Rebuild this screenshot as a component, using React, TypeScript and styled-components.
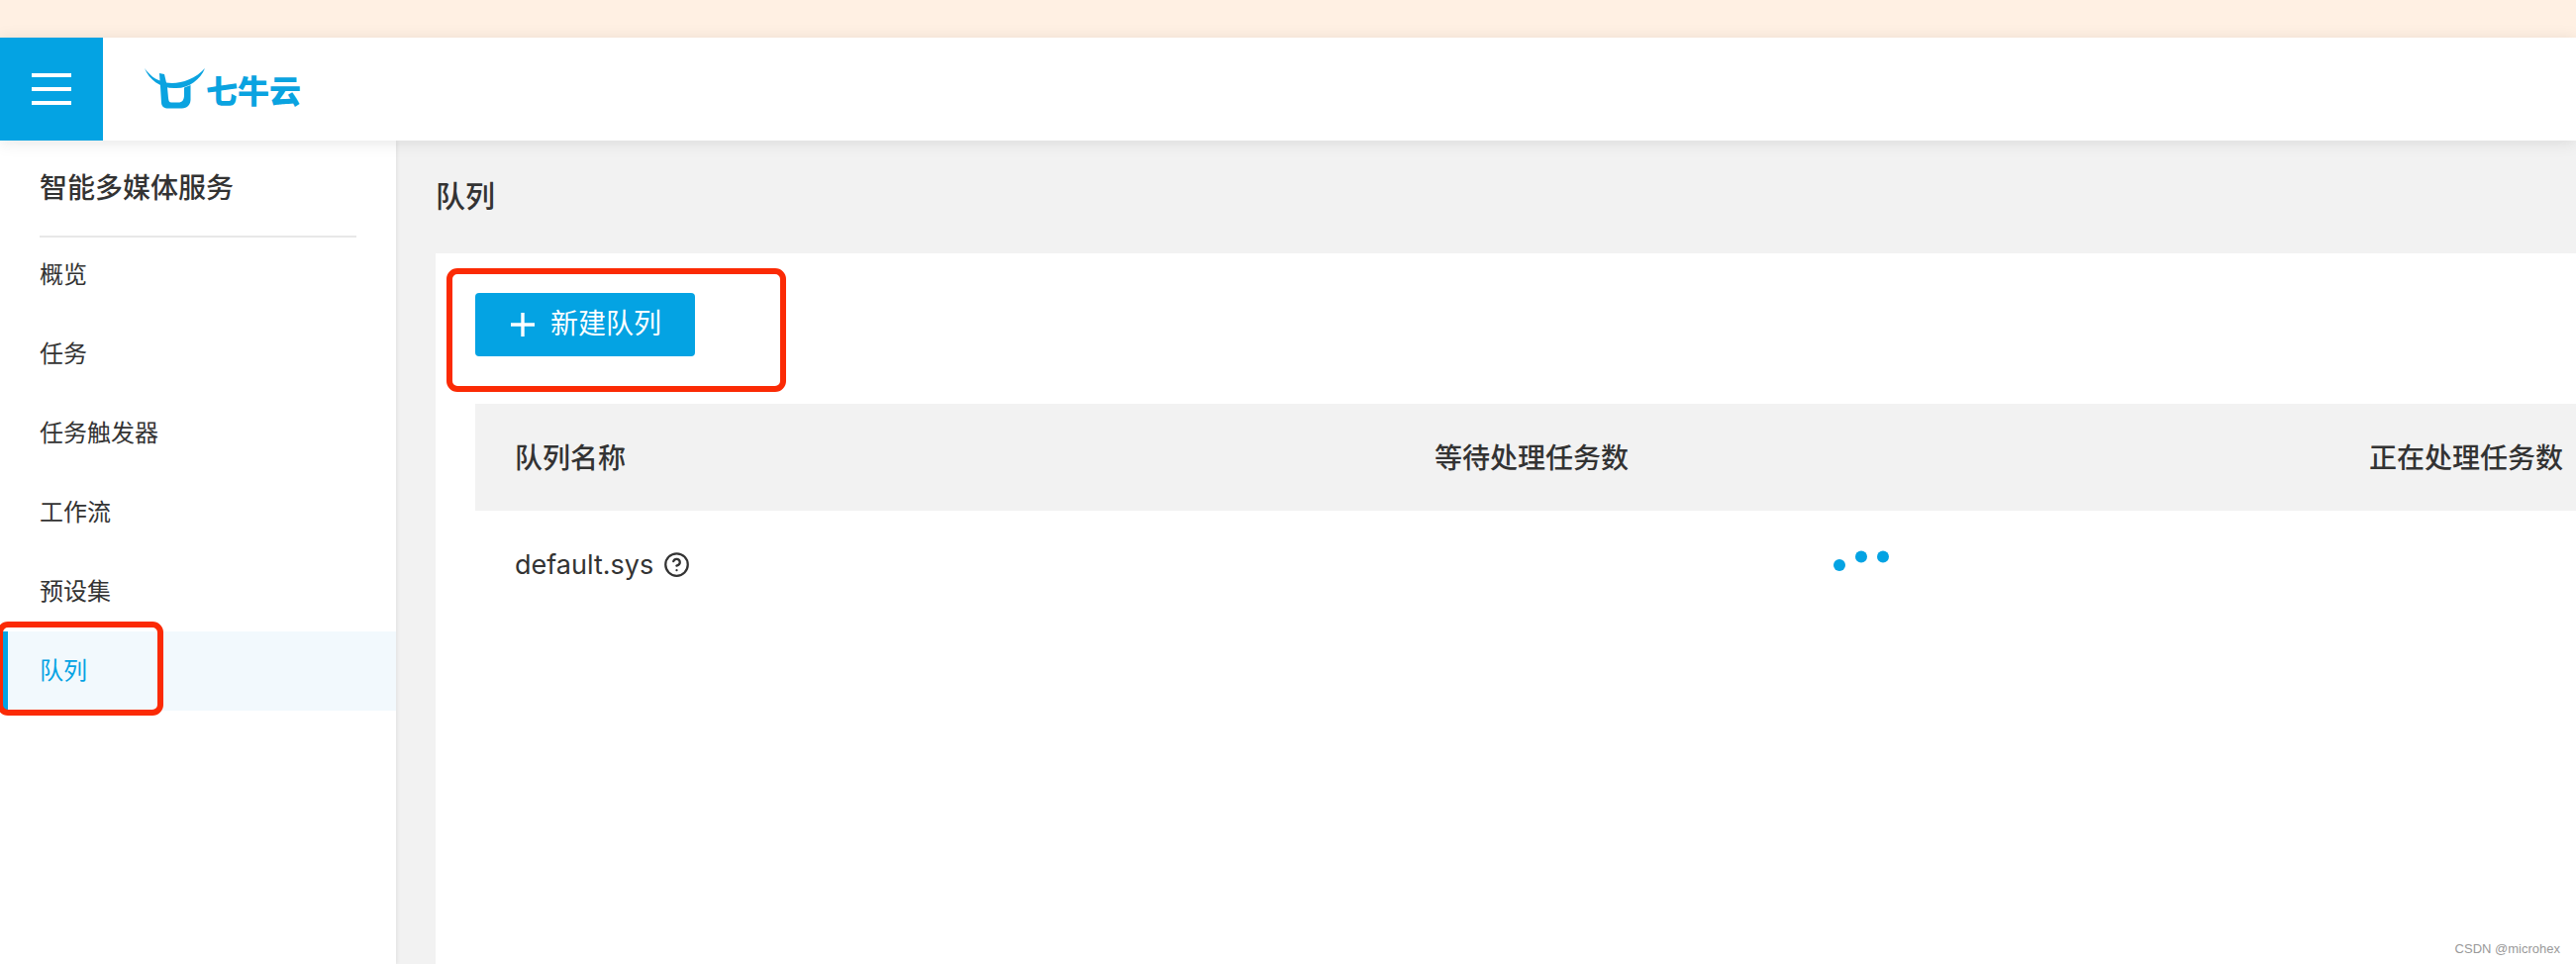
import { CircleHelp } from "lucide-react";
import styled, { createGlobalStyle } from "styled-components";

const cjk = `Inter, "Noto Sans CJK SC", sans-serif`;

const GlobalStyle = createGlobalStyle`
  html, body {
    margin: 0;
    padding: 0;
    background: #f2f2f2;
  }
  * {
    box-sizing: border-box;
  }
`;

const Page = styled.div`
  position: relative;
  width: 2602px;
  height: 974px;
  display: flex;
  flex-direction: column;
  overflow: hidden;
  font-family: ${cjk};
  color: #333;
`;

const Banner = styled.div`
  height: 38px;
  flex: none;
  background: #fff0e3;
`;

const Header = styled.header`
  position: relative;
  z-index: 2;
  height: 104px;
  flex: none;
  display: flex;
  align-items: center;
  background: #fff;
  box-shadow: 0 2px 16px rgba(0, 0, 0, 0.1);
`;

const MenuButton = styled.div`
  width: 104px;
  height: 104px;
  display: flex;
  flex-direction: column;
  justify-content: center;
  align-items: center;
  gap: 10px;
  background: #04a3e3;
  span {
    width: 40px;
    height: 4px;
    background: #fff;
  }
`;

const Logo = styled.div`
  margin-left: 42px;
  display: flex;
  align-items: flex-end;
  height: 42px;
`;

const LogoText = styled.span`
  font-family: "Noto Sans CJK SC", sans-serif;
  font-size: 32px;
  font-weight: 900;
  line-height: 42px;
  color: #0aa3e0;
`;

const Body = styled.div`
  flex: 1;
  display: flex;
  min-height: 0;
`;

const Sidebar = styled.aside`
  position: relative;
  z-index: 1;
  width: 400px;
  flex: none;
  background: #fff;
  box-shadow: 1px 0 4px rgba(0, 0, 0, 0.08);
`;

const SideTitle = styled.div`
  height: 98px;
  margin: 0 40px;
  padding-top: 28px;
  border-bottom: 2px solid #e8e8e8;
  font-size: 28px;
  line-height: 40px;
  font-weight: 500;
`;

const SideNav = styled.nav`
  margin-top: -2px;
`;

const NavItem = styled.div<{ $active?: boolean }>`
  height: 80px;
  display: flex;
  align-items: center;
  padding-left: ${(p) => (p.$active ? "32px" : "40px")};
  padding-bottom: 6px;
  font-size: 24px;
  color: ${(p) => (p.$active ? "#04a3e3" : "#333")};
  background: ${(p) => (p.$active ? "#f2f9fd" : "transparent")};
  border-left: ${(p) => (p.$active ? "8px solid #04a3e3" : "none")};
`;

const Main = styled.main`
  flex: 1;
  min-width: 0;
  padding-left: 40px;
`;

const PageTitle = styled.h1`
  margin: 0;
  height: 114px;
  padding-bottom: 7px;
  display: flex;
  align-items: center;
  font-size: 30px;
  font-weight: 500;
`;

const Card = styled.section`
  height: 718px;
  padding: 40px 0 0 40px;
  background: #fff;
`;

const PrimaryButton = styled.button`
  width: 222px;
  height: 64px;
  padding: 0 0 0 36px;
  display: flex;
  align-items: center;
  gap: 16px;
  border: none;
  border-radius: 4px;
  background: #04a3e3;
  color: #fff;
  font-family: inherit;
  font-size: 28px;
  line-height: 60px;
`;

const ButtonLabel = styled.span`
  margin-top: -3px;
`;

const TableRow = styled.div<{ $head?: boolean }>`
  height: 108px;
  display: grid;
  grid-template-columns: 929px 944px 1fr;
  align-items: center;
  padding-left: 40px;
  padding-bottom: ${(p) => (p.$head ? "3px" : "0")};
  white-space: nowrap;
  font-size: 28px;
  font-weight: ${(p) => (p.$head ? 500 : 400)};
  background: ${(p) => (p.$head ? "#f2f2f2" : "transparent")};
`;

const TableHead = styled.div`
  margin-top: 48px;
`;

const QueueName = styled.div`
  display: flex;
  align-items: center;
  gap: 10px;
  font-size: 27px;
`;

const Loading = styled.div`
  display: flex;
  gap: 10px;
  margin-top: 2px;
  padding-left: 403px;
`;

const Dot = styled.i<{ $lift?: boolean }>`
  width: 12px;
  height: 12px;
  border-radius: 50%;
  background: #04a3e3;
  transform: translateY(${(p) => (p.$lift ? "-8.5px" : "0")});
`;

const Annotation = styled.div<{ $x: number; $y: number; $w: number; $h: number }>`
  position: absolute;
  z-index: 3;
  left: ${(p) => p.$x}px;
  top: ${(p) => p.$y}px;
  width: ${(p) => p.$w}px;
  height: ${(p) => p.$h}px;
  border: 6px solid #fb2a05;
  border-radius: 11px;
`;

const Watermark = styled.div`
  position: absolute;
  z-index: 3;
  right: 16px;
  bottom: 8px;
  font-family: "Liberation Sans", sans-serif;
  font-size: 13px;
  line-height: 15px;
  color: #999;
`;

const navItems = ["概览", "任务", "任务触发器", "工作流", "预设集", "队列"];

function BullMark() {
  return (
    <svg width="62" height="42" viewBox="0 0 62 42" fill="#0aa3e0">
      <path d="M0 0C6 8 11 11 15.5 12.5L15 5L20 6L22 14.5C34 16.5 50 12 61 0C56 12 44 21 30 20C16 20 5 12 0 0Z" />
      <path d="M15.8 15L17 35C17.5 39 20 40.5 24 40.5L36 40.5C41 40.5 46 39 46.5 32L46.5 17L40 19.5L40 27C40 32 38 34.5 34 34.5L27 34.5C25 34.5 24.3 33 24 30L22.8 17Z" />
    </svg>
  );
}

function PlusIcon() {
  return (
    <svg width="24" height="24" viewBox="0 0 24 24" fill="none" stroke="#fff" strokeWidth="3.4">
      <path d="M0 12H24M12 0V24" />
    </svg>
  );
}

export default function App() {
  return (
    <Page>
      <GlobalStyle />
      <Banner />
      <Header>
        <MenuButton>
          <span />
          <span />
          <span />
        </MenuButton>
        <Logo>
          <BullMark />
          <LogoText>七牛云</LogoText>
        </Logo>
      </Header>
      <Body>
        <Sidebar>
          <SideTitle>智能多媒体服务</SideTitle>
          <SideNav>
            {navItems.map((item) => (
              <NavItem key={item} $active={item === "队列"}>
                {item}
              </NavItem>
            ))}
          </SideNav>
        </Sidebar>
        <Main>
          <PageTitle>队列</PageTitle>
          <Card>
            <PrimaryButton>
              <PlusIcon />
              <ButtonLabel>新建队列</ButtonLabel>
            </PrimaryButton>
            <TableHead>
              <TableRow $head>
                <div>队列名称</div>
                <div>等待处理任务数</div>
                <div>正在处理任务数</div>
              </TableRow>
              <TableRow>
                <QueueName>
                  default.sys
                  <CircleHelp size={27} strokeWidth={2} />
                </QueueName>
                <Loading>
                  <Dot />
                  <Dot $lift />
                  <Dot $lift />
                </Loading>
                <div />
              </TableRow>
            </TableHead>
          </Card>
        </Main>
      </Body>
      <Annotation $x={451} $y={271} $w={343} $h={125} />
      <Annotation $x={-3} $y={628} $w={168} $h={95} />
      <Watermark>CSDN @microhex</Watermark>
    </Page>
  );
}
